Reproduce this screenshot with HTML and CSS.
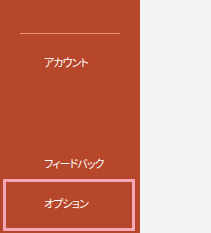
FILE: index.html
```html
<!DOCTYPE html>
<html lang="ja">
<head>
<meta charset="utf-8">
<link rel="stylesheet" href="styles.css">
</head>
<body>
<div class="page">
  <nav class="sidebar">
    <div class="divider"></div>
    <div class="item item-account">アカウント</div>
    <div class="item item-feedback">フィードバック</div>
    <div class="item item-option">オプション</div>
  </nav>
  <main class="content"></main>
</div>
</body>
</html>
```
FILE: styles.css
```css
html, body {
  margin: 0;
  padding: 0;
}
body {
  background: #f3f3f3;
  font-family: "Noto Sans CJK JP", "Noto Sans", sans-serif;
}
.page {
  display: flex;
  width: 211px;
  height: 233px;
  overflow: hidden;
}
.sidebar {
  width: 140px;
  height: 233px;
  background: #b7472a;
  display: flex;
  flex-direction: column;
  flex-shrink: 0;
}
.content {
  flex: 1;
  background: #f3f3f3;
}
.divider {
  margin: 33px 0 0 20px;
  width: 100px;
  height: 1px;
  background: #e8907a;
}
.item {
  margin: 0 5px 0 3px;
  border: 3px solid transparent;
  padding-left: 38px;
  color: #ffffff;
  font-size: 11px;
  line-height: 20px;
  letter-spacing: -0.9px;
  font-feature-settings: "palt";
}
.item-account {
  margin-top: 15px;
}
.item-feedback {
  margin-top: auto;
  margin-bottom: 3px;
}
.item-option {
  border-color: #f7a7b8;
  padding-top: 11px;
  padding-bottom: 15px;
  margin-bottom: 2px;
}
```
